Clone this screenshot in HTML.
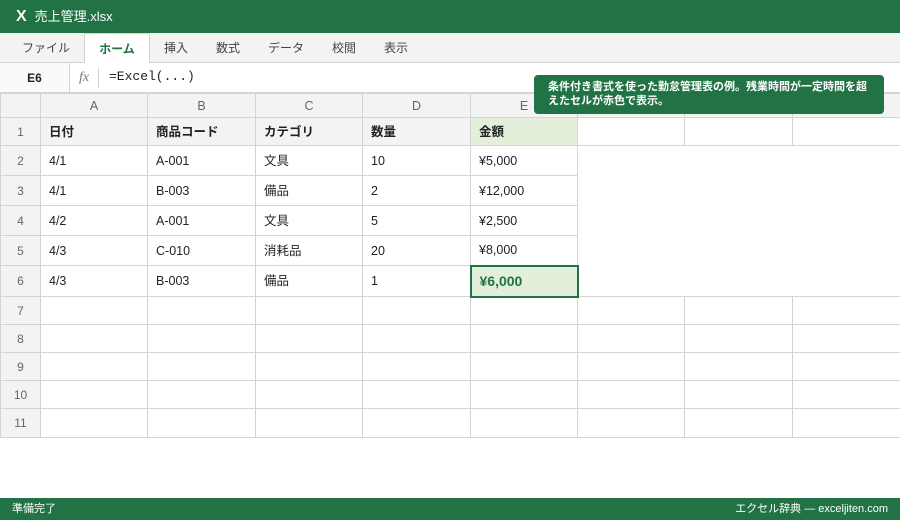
<!DOCTYPE html>
<html><head><meta charset="utf-8"><style>
*{margin:0;padding:0;box-sizing:border-box}
body{width:900px;height:520px;overflow:hidden;background:#fff;font-family:"Liberation Sans","Noto Sans CJK JP",sans-serif;position:relative;color:#222}
.title{position:absolute;left:0;top:0;width:900px;height:33px;background:#217346;color:#fff;font-size:13px;line-height:33px;padding-left:16px}
.title b{font-size:16px;margin-right:8px}
.tabs{position:absolute;top:33px;left:0;width:900px;height:30px;background:#f3f3f3;border-bottom:1px solid #d4d4d4}
.tab{position:absolute;top:0;height:30px;line-height:30px;font-size:12px;color:#444}
.tab.act{background:#fff;border:1px solid #d4d4d4;border-bottom:none;height:31px;color:#217346;font-weight:bold;text-align:center}
.fbar{position:absolute;top:63px;left:0;width:900px;height:30px;background:#fff;border-bottom:1px solid #d4d4d4}
.nb{position:absolute;left:0;top:0;width:70px;height:29px;line-height:30px;text-align:center;font-size:12px;font-weight:bold;background:#fafafa;border-right:1px solid #d4d4d4}
.fx{position:absolute;left:79px;top:0;line-height:30px;font-style:italic;color:#777;font-size:14px;font-family:"Liberation Serif",serif}
.fsep{position:absolute;left:98px;top:5px;width:1px;height:20px;background:#d4d4d4}
.ftx{position:absolute;left:109px;top:0;line-height:28px;font-family:"Liberation Mono",monospace;font-size:13px}
table{position:absolute;left:0;top:93px;border-collapse:collapse;table-layout:fixed;width:900px}
td{border:1px solid #d4d4d4;font-size:12.5px;padding-left:8px;white-space:nowrap;line-height:14px;vertical-align:middle}
td.h{background:#f3f3f3;color:#666;text-align:center;padding:0}
td.rh{background:#f3f3f3;color:#666;text-align:center;padding:0;font-size:12px}
tr.r1 td{background:#f3f3f3;font-weight:bold}
tr.r1 td.e{background:#e2efda}
tr.r1 td.w{background:#fff}
td.n{border:none}
td.sel{border:2px solid #217346;background:#e2efda;color:#217346;font-weight:bold;font-size:14px}
.tip{position:absolute;left:534px;top:75px;width:350px;height:39px;background:#217346;color:#fff;border-radius:4px;font-size:11px;font-weight:bold;line-height:14px;padding:5px 14px}
.status{position:absolute;left:0;top:498px;width:900px;height:22px;background:#217346;color:#fff;font-size:11px;line-height:23px;padding:0 12px}
.status span{float:right}
</style></head><body>
<div class="title"><b>X</b>売上管理.xlsx</div>
<div class="tabs">
<div class="tab" style="left:22px">ファイル</div>
<div class="tab act" style="left:84px;width:66px">ホーム</div>
<div class="tab" style="left:164px">挿入</div>
<div class="tab" style="left:216px">数式</div>
<div class="tab" style="left:268px">データ</div>
<div class="tab" style="left:332px">校閲</div>
<div class="tab" style="left:384px">表示</div>
</div>
<div class="fbar"><div class="nb">E6</div><div class="fx">fx</div><div class="fsep"></div><div class="ftx">=Excel(...)</div></div>
<table>
<colgroup><col style="width:40px"><col style="width:107px"><col style="width:108px"><col style="width:107px"><col style="width:108px"><col style="width:107px"><col style="width:107px"><col style="width:108px"><col style="width:108px"></colgroup>
<tr style="height:24px"><td class="h"></td><td class="h">A</td><td class="h">B</td><td class="h">C</td><td class="h">D</td><td class="h">E</td><td class="h">F</td><td class="h">G</td><td class="h">H</td></tr>
<tr class="r1" style="height:28px"><td class="rh" style="font-weight:normal">1</td><td>日付</td><td>商品コード</td><td>カテゴリ</td><td>数量</td><td class="e">金額</td><td class="w"></td><td class="w"></td><td class="w"></td></tr>
<tr style="height:30px"><td class="rh">2</td><td>4/1</td><td>A-001</td><td>文具</td><td>10</td><td>¥5,000</td><td class="n"></td><td class="n"></td><td class="n"></td></tr>
<tr style="height:30px"><td class="rh">3</td><td>4/1</td><td>B-003</td><td>備品</td><td>2</td><td>¥12,000</td><td class="n"></td><td class="n"></td><td class="n"></td></tr>
<tr style="height:30px"><td class="rh">4</td><td>4/2</td><td>A-001</td><td>文具</td><td>5</td><td>¥2,500</td><td class="n"></td><td class="n"></td><td class="n"></td></tr>
<tr style="height:30px"><td class="rh">5</td><td>4/3</td><td>C-010</td><td>消耗品</td><td>20</td><td>¥8,000</td><td class="n"></td><td class="n"></td><td class="n"></td></tr>
<tr style="height:31px"><td class="rh">6</td><td>4/3</td><td>B-003</td><td>備品</td><td>1</td><td class="sel">¥6,000</td><td class="n"></td><td class="n"></td><td class="n"></td></tr>
<tr style="height:28px"><td class="rh">7</td><td></td><td></td><td></td><td></td><td></td><td></td><td></td><td></td></tr>
<tr style="height:28px"><td class="rh">8</td><td></td><td></td><td></td><td></td><td></td><td></td><td></td><td></td></tr>
<tr style="height:28px"><td class="rh">9</td><td></td><td></td><td></td><td></td><td></td><td></td><td></td><td></td></tr>
<tr style="height:28px"><td class="rh">10</td><td></td><td></td><td></td><td></td><td></td><td></td><td></td><td></td></tr>
<tr style="height:29px"><td class="rh">11</td><td></td><td></td><td></td><td></td><td></td><td></td><td></td><td></td></tr>
</table>
<div class="tip">条件付き書式を使った勤怠管理表の例。残業時間が一定時間を超えたセルが赤色で表示。</div>
<div class="status">準備完了<span>エクセル辞典 — exceljiten.com</span></div>
</body></html>
